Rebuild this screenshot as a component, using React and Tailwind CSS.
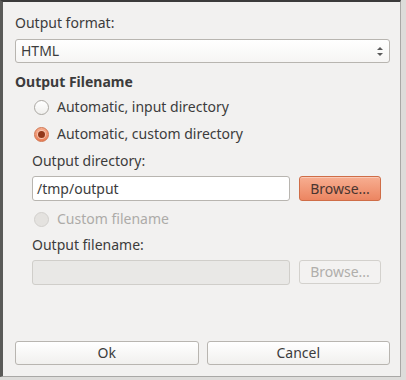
const font = { fontFamily: '"Noto Sans", "DejaVu Sans", sans-serif' };

const Radio = ({ checked, disabled, label }) => (
  <div className="flex items-center h-[18px] pl-[19px] gap-[8px]">
    {checked ? (
      <span className="w-[15px] h-[15px] rounded-full border border-[#d07550] bg-gradient-to-b from-[#f6ae90] to-[#ea7d55] flex items-center justify-center">
        <span className="w-[7px] h-[7px] rounded-full bg-[#93381a] ring-1 ring-[#f5c6b0]" />
      </span>
    ) : disabled ? (
      <span className="w-[15px] h-[15px] rounded-full border border-[#d2d0cd] bg-[#e4e2df]" />
    ) : (
      <span className="w-[15px] h-[15px] rounded-full border border-[#aaa7a2] bg-gradient-to-b from-white to-[#f0efed]" />
    )}
    <span className={disabled ? "text-[#adaba8]" : "text-[#3c3c3c]"}>{label}</span>
  </div>
);

const Browse = ({ active }) =>
  active ? (
    <button className="w-[82px] h-[25px] rounded-[3px] border border-[#cf6d47] bg-gradient-to-b from-[#f7ae91] to-[#ec8561] text-[#4a3530] text-[14px] shadow-[inset_0_1px_0_rgba(255,255,255,0.35)]">
      Browse...
    </button>
  ) : (
    <button className="w-[82px] h-[24px] rounded-[3px] border border-[#d3d1cd] bg-[#f3f2f1] text-[#b0aeab] text-[14px]">
      Browse...
    </button>
  );

export default function App() {
  return (
    <div className="w-[406px] h-[380px] bg-[#dddcda]" style={font}>
      <div className="w-[401px] h-[377px] bg-[#f2f1f0] border-t-2 border-t-[#3b3b3b] border-l-[3px] border-l-[#5a5a58] border-r border-r-[#a9a8a6] border-b border-b-[#a9a8a6] flex flex-col pl-[12px] pr-[10px] pt-[12px] pb-[11px] text-[14px] leading-[18px] text-[#3c3c3c]">
        <div className="h-[18px]">Output format:</div>
        <div className="mt-[7px] h-[24px] rounded-[3px] border border-[#b8b5b0] bg-gradient-to-b from-white to-[#f6f5f4] flex items-center justify-between pl-[5px] pr-[6px]">
          <span>HTML</span>
          <span className="flex flex-col items-center gap-[3px]">
            <svg width="6" height="3" viewBox="0 0 6 3"><path d="M0 3 L3 0 L6 3 Z" fill="#5a5a5a" /></svg>
            <svg width="6" height="3" viewBox="0 0 6 3"><path d="M0 0 L3 3 L6 0 Z" fill="#5a5a5a" /></svg>
          </span>
        </div>
        <div className="mt-[10px] h-[18px] font-bold">Output Filename</div>
        <div className="mt-[7px]">
          <Radio label="Automatic, input directory" />
        </div>
        <div className="mt-[9px]">
          <Radio checked label="Automatic, custom directory" />
        </div>
        <div className="pl-[17px] pr-[9px] flex flex-col">
          <div className="mt-[9px] h-[18px]">Output directory:</div>
          <div className="mt-[6px] flex gap-[9px]">
            <div className="flex-1 h-[25px] rounded-[3px] border border-[#b8b5b0] bg-white flex items-center pl-[4px]">
              /tmp/output
            </div>
            <Browse active />
          </div>
        </div>
        <div className="mt-[9px]">
          <Radio disabled label="Custom filename" />
        </div>
        <div className="pl-[17px] pr-[9px] flex flex-col">
          <div className="mt-[8px] h-[18px]">Output filename:</div>
          <div className="mt-[6px] flex gap-[9px]">
            <div className="flex-1 h-[25px] rounded-[3px] border border-[#d0ceca] bg-[#e9e8e6]" />
            <Browse />
          </div>
        </div>
        <div className="flex-1" />
        <div className="flex gap-[8px]">
          <button className="flex-1 h-[24px] rounded-[3px] border border-[#b8b5b0] bg-gradient-to-b from-white to-[#f1f0ee] text-[14px] text-[#3c3c3c]">
            Ok
          </button>
          <button className="flex-1 h-[24px] rounded-[3px] border border-[#b8b5b0] bg-gradient-to-b from-white to-[#f1f0ee] text-[14px] text-[#3c3c3c]">
            Cancel
          </button>
        </div>
      </div>
    </div>
  );
}
